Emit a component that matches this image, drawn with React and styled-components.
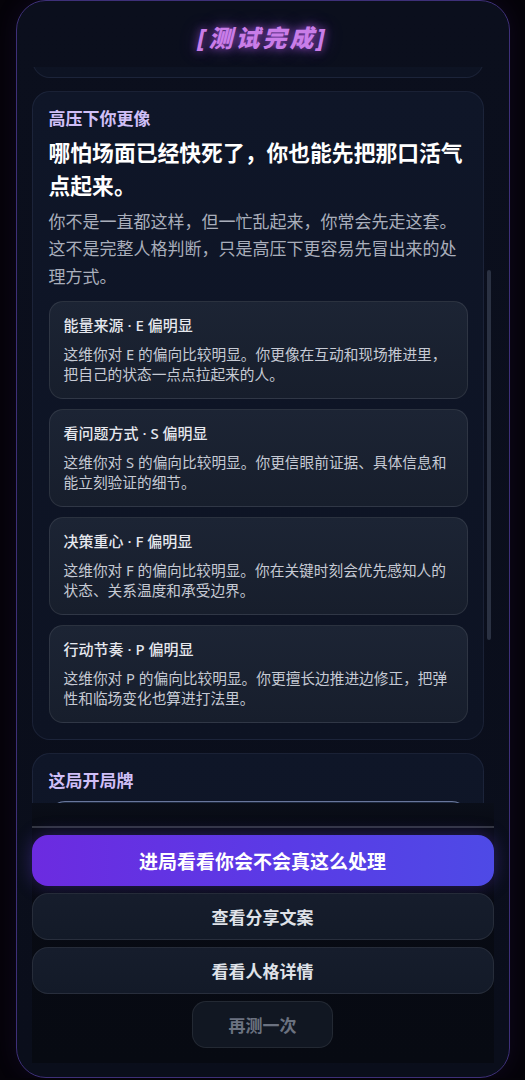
import React, { useLayoutEffect, useRef, useState } from "react";
import styled, { createGlobalStyle } from "styled-components";

const GlobalStyle = createGlobalStyle`
  * {
    box-sizing: border-box;
  }

  html,
  body {
    margin: 0;
    padding: 0;
    background: #050309;
    font-family: "Noto Sans", "Noto Sans CJK SC", sans-serif;
    text-autospace: no-autospace;
  }
`;

const Frame = styled.div`
  width: 494px;
  height: 1078px;
  margin: 0 auto;
  padding: 0 15px 14px;
  display: flex;
  flex-direction: column;
  background: linear-gradient(180deg, #0b0f1d 0%, #0a0e1b 100%);
  border: 1px solid #3e3079;
  border-radius: 30px;
  box-shadow: 0 0 24px rgba(90, 50, 180, 0.12);
  overflow: hidden;
`;

const Header = styled.header`
  height: 66px;
  flex-shrink: 0;
  display: flex;
  justify-content: center;
  padding-top: 21px;
`;

const Title = styled.h1`
  margin: 0;
  font-size: 24px;
  line-height: 32px;
  font-weight: 800;
  font-style: italic;
  letter-spacing: 3px;
  color: #c97de8;
  text-shadow: 0 0 8px rgba(205, 100, 255, 0.65),
    0 0 18px rgba(150, 80, 255, 0.35);
`;

const ScrollRow = styled.div`
  flex: 1;
  min-height: 0;
  display: flex;
`;

const Scroller = styled.div`
  flex: 1;
  min-width: 0;
  overflow-y: auto;
  position: relative;
  scrollbar-width: none;

  &::-webkit-scrollbar {
    display: none;
  }
`;

const CardList = styled.div`
  display: flex;
  flex-direction: column;
  gap: 13px;
`;

const Track = styled.div`
  width: 10px;
  flex-shrink: 0;
  padding: 0 3px;
`;

const Thumb = styled.div`
  width: 4px;
  border-radius: 2px;
  background: #2a3142;
`;

const Card = styled.section`
  background: linear-gradient(180deg, #0f1628 0%, #0d1323 100%);
  border: 1px solid rgba(120, 140, 190, 0.12);
  border-radius: 18px;
  padding: 15px 15px 16px 16px;
  min-height: ${(props) => props.$minHeight || "auto"};
`;

const Eyebrow = styled.div`
  font-size: 17px;
  line-height: 24px;
  font-weight: 700;
  color: #cfbff7;
`;

const Headline = styled.h2`
  margin: 5px 0 0;
  font-size: 21.8px;
  line-height: 33px;
  font-weight: 700;
  color: #ffffff;
`;

const Body = styled.p`
  margin: 6px 0 0;
  font-size: 17px;
  line-height: 27.3px;
  color: #a9aebb;
`;

const TraitList = styled.div`
  margin-top: 11px;
  display: flex;
  flex-direction: column;
  gap: 10px;
`;

const Trait = styled.div`
  background: linear-gradient(180deg, #1c2434 0%, #171e2c 100%);
  border: 1px solid rgba(255, 255, 255, 0.09);
  border-radius: 14px;
  padding: 13px 10px 14px 14px;
`;

const TraitTitle = styled.div`
  font-size: 15px;
  line-height: 20px;
  font-weight: 500;
  color: #e6e8ee;
`;

const TraitText = styled.div`
  margin-top: 9px;
  font-size: 14.7px;
  line-height: 20px;
  color: #c6cad4;
`;

const DrawCard = styled.div`
  margin-top: 8px;
  min-height: 309px;
  display: flex;
  align-items: center;
  justify-content: center;
  border-radius: 16px;
  background: linear-gradient(180deg, #1f2a40 0%, #141b2b 100%);
  border: 1px solid rgba(130, 150, 200, 0.22);
  border-top-color: rgba(160, 180, 230, 0.6);
`;

const HeroType = styled.div`
  margin-top: 12px;
  font-size: 44px;
  line-height: 52px;
  font-weight: 800;
  color: #ffffff;
`;

const ActionPanel = styled.div`
  flex-shrink: 0;
  height: 260px;
  padding-top: 23px;
  padding-bottom: 15px;
  background: linear-gradient(
    180deg,
    rgba(10, 14, 24, 0.85) 0px,
    #080b14 23px,
    #070a12 100%
  );
  display: flex;
  flex-direction: column;
`;

const Divider = styled.div`
  height: 2px;
  background: #32363f;
`;

const ButtonStack = styled.div`
  padding-top: 7px;
  display: flex;
  flex-direction: column;
  align-items: center;
  gap: 7px;
`;

const Button = styled.button`
  width: ${(props) => (props.$compact ? "141px" : "100%")};
  height: ${(props) => (props.$primary ? "51px" : "47px")};
  border-radius: ${(props) => (props.$compact ? "14px" : "16px")};
  font-family: inherit;
  font-size: ${(props) => (props.$primary ? "19px" : "17px")};
  font-weight: 700;
  cursor: pointer;
  color: ${(props) =>
    props.$primary ? "#ffffff" : props.$compact ? "#6b7280" : "#dfe2e8"};
  background: ${(props) =>
    props.$primary
      ? "linear-gradient(90deg, #6c2be0 0%, #5a3be6 55%, #4e4ae6 100%)"
      : props.$compact
      ? "#111722"
      : "linear-gradient(180deg, #161d2c 0%, #131a28 100%)"};
  border: ${(props) =>
    props.$primary ? "none" : "1px solid rgba(255, 255, 255, 0.08)"};
  box-shadow: ${(props) =>
    props.$primary ? "0 0 18px rgba(110, 70, 240, 0.35)" : "none"};
`;

const traits = [
  {
    title: "能量来源 · E 偏明显",
    text: "这维你对 E 的偏向比较明显。你更像在互动和现场推进里，把自己的状态一点点拉起来的人。",
  },
  {
    title: "看问题方式 · S 偏明显",
    text: "这维你对 S 的偏向比较明显。你更信眼前证据、具体信息和能立刻验证的细节。",
  },
  {
    title: "决策重心 · F 偏明显",
    text: "这维你对 F 的偏向比较明显。你在关键时刻会优先感知人的状态、关系温度和承受边界。",
  },
  {
    title: "行动节奏 · P 偏明显",
    text: "这维你对 P 的偏向比较明显。你更擅长边推进边修正，把弹性和临场变化也算进打法里。",
  },
];

const App = () => {
  const scrollRef = useRef(null);
  const focusRef = useRef(null);
  const [thumb, setThumb] = useState({ top: 203, height: 370 });

  useLayoutEffect(() => {
    const el = scrollRef.current;
    if (!el || !focusRef.current) return;
    el.scrollTop = focusRef.current.offsetTop - 24;
    const track = el.clientHeight;
    setThumb({
      top: (el.scrollTop / el.scrollHeight) * track,
      height: (el.clientHeight / el.scrollHeight) * track,
    });
  }, []);

  return (
    <>
      <GlobalStyle />
      <Frame>
        <Header>
          <Title>[测试完成]</Title>
        </Header>

        <ScrollRow>
          <Scroller ref={scrollRef}>
            <CardList>
              <Card $minHeight="415px">
                <Eyebrow>你的结果</Eyebrow>
                <HeroType>ESFP</HeroType>
              </Card>

              <Card ref={focusRef}>
                <Eyebrow>高压下你更像</Eyebrow>
                <Headline>哪怕场面已经快死了，你也能先把那口活气点起来。</Headline>
                <Body>
                  你不是一直都这样，但一忙乱起来，你常会先走这套。这不是完整人格判断，只是高压下更容易先冒出来的处理方式。
                </Body>
                <TraitList>
                  {traits.map((item) => (
                    <Trait key={item.title}>
                      <TraitTitle>{item.title}</TraitTitle>
                      <TraitText>{item.text}</TraitText>
                    </Trait>
                  ))}
                </TraitList>
              </Card>

              <Card>
                <Eyebrow>这局开局牌</Eyebrow>
                <DrawCard>
                  <svg width="64" height="64" viewBox="0 0 64 64" fill="none">
                    <path
                      d="M32 6l6.5 18.5L58 32l-19.5 7.5L32 58l-6.5-18.5L6 32l19.5-7.5z"
                      stroke="#8b7cf0"
                      strokeWidth="2"
                      strokeLinejoin="round"
                    />
                  </svg>
                </DrawCard>
              </Card>
            </CardList>
          </Scroller>
          <Track>
            <Thumb style={{ marginTop: thumb.top, height: thumb.height }} />
          </Track>
        </ScrollRow>

        <ActionPanel>
          <Divider />
          <ButtonStack>
            <Button $primary>进局看看你会不会真这么处理</Button>
            <Button>查看分享文案</Button>
            <Button>看看人格详情</Button>
            <Button $compact>再测一次</Button>
          </ButtonStack>
        </ActionPanel>
      </Frame>
    </>
  );
};

export default App;
